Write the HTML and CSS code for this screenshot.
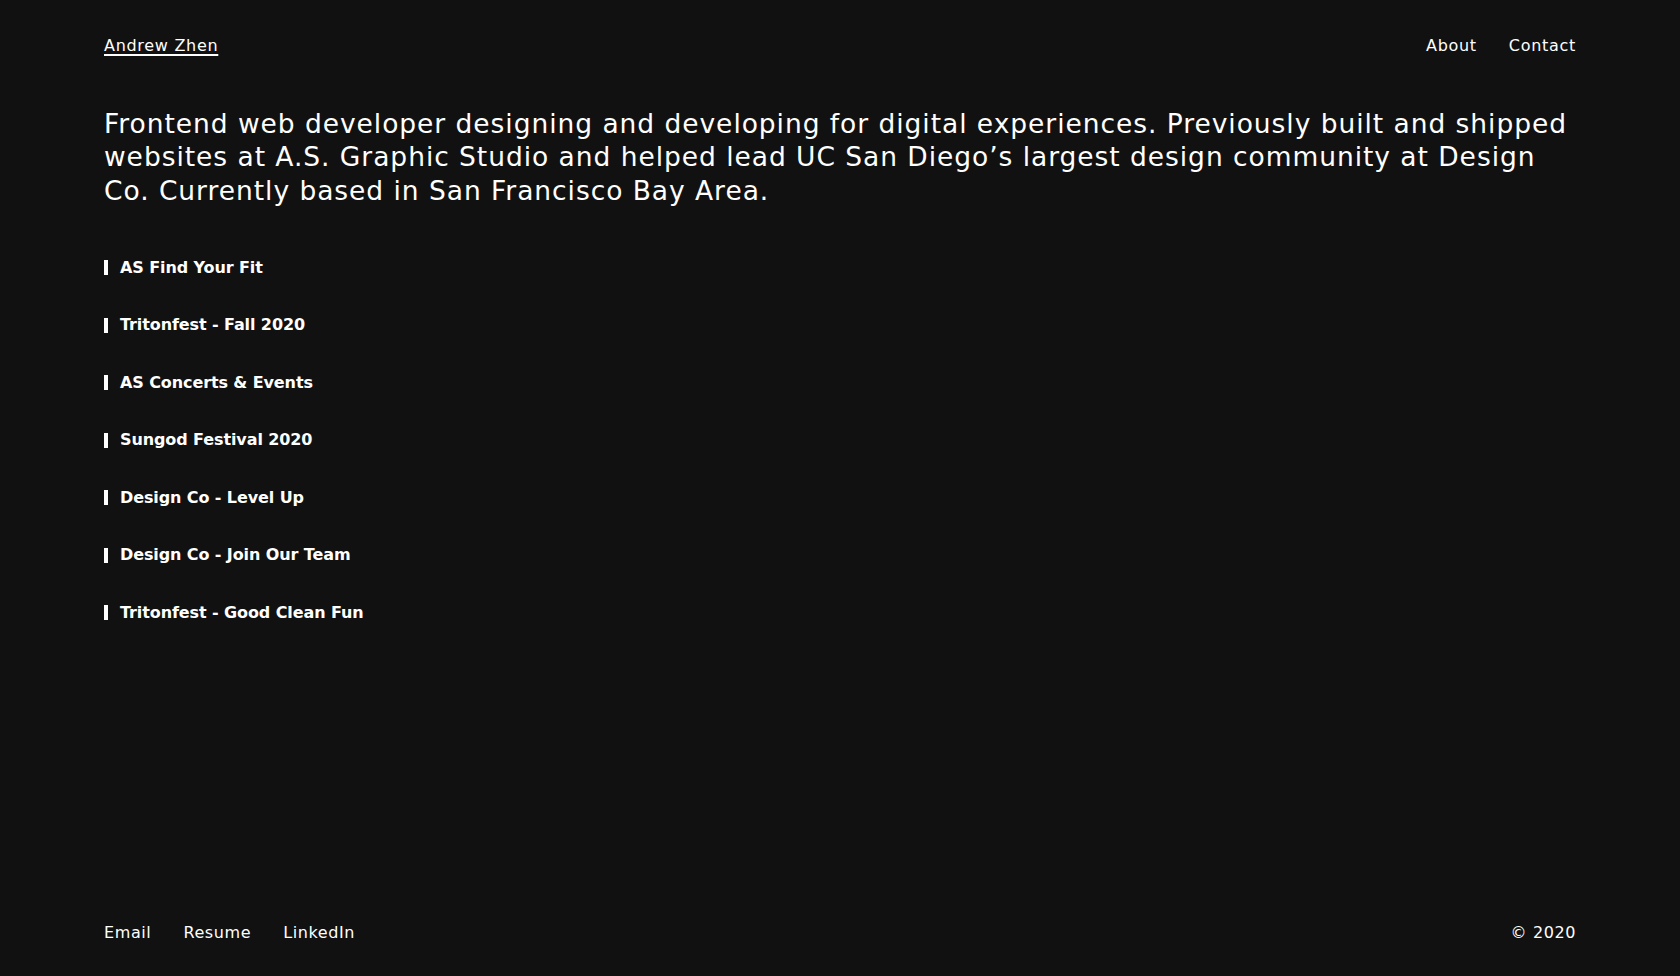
FILE: index.html
```html
<!DOCTYPE html>
<html lang="en">
<head>
<meta charset="utf-8">
<title>Andrew Zhen</title>
<link rel="stylesheet" href="styles.css">
</head>
<body>
<div class="page">
  <header class="header">
    <a class="logo" href="#">Andrew Zhen</a>
    <nav class="nav">
      <a href="#">About</a>
      <a href="#">Contact</a>
    </nav>
  </header>
  <main class="main">
    <p class="bio">Frontend web developer designing and developing for digital experiences. Previously built and shipped websites at A.S. Graphic Studio and helped lead UC San Diego’s largest design community at Design Co. Currently based in San Francisco Bay Area.</p>
    <ul class="projects">
      <li><a href="#">AS Find Your Fit</a></li>
      <li><a href="#">Tritonfest - Fall 2020</a></li>
      <li><a href="#">AS Concerts &amp; Events</a></li>
      <li><a href="#">Sungod Festival 2020</a></li>
      <li><a href="#">Design Co - Level Up</a></li>
      <li><a href="#">Design Co - Join Our Team</a></li>
      <li><a href="#">Tritonfest - Good Clean Fun</a></li>
    </ul>
  </main>
  <footer class="footer">
    <nav class="links">
      <a href="#">Email</a>
      <a href="#">Resume</a>
      <a href="#">LinkedIn</a>
    </nav>
    <span class="copy">© 2020</span>
  </footer>
</div>
</body>
</html>
```
FILE: styles.css
```css
html, body {
  margin: 0;
  padding: 0;
  background: #111111;
  color: #ffffff;
  font-family: "DejaVu Sans", sans-serif;
}
a { color: inherit; text-decoration: none; }
.page {
  min-height: 976px;
  box-sizing: border-box;
  padding: 0 104px;
  display: flex;
  flex-direction: column;
}
.header {
  display: flex;
  justify-content: space-between;
  align-items: center;
  padding-top: 35px;
  font-size: 16px;
  line-height: 22px;
  letter-spacing: 0.7px;
}
.logo {
  text-decoration: underline;
  text-decoration-thickness: 2px;
  text-underline-offset: 3px;
}
.nav { display: flex; gap: 32px; }
.main { flex: 1; }
.bio {
  margin: 49.5px 0 0;
  font-size: 26.5px;
  line-height: 33.75px;
  letter-spacing: 0.95px;
}
.projects {
  list-style: none;
  margin: 49px 0 0;
  padding: 0;
  display: flex;
  flex-direction: column;
  gap: 35.5px;
}
.projects li {
  display: flex;
  align-items: center;
  gap: 12px;
  font-size: 16px;
  font-weight: bold;
  line-height: 22px;
  letter-spacing: -0.1px;
}
.projects li::before {
  content: "";
  width: 4px;
  height: 15px;
  background: #fff;
}
.footer {
  display: flex;
  justify-content: space-between;
  align-items: center;
  padding-bottom: 32px;
  font-size: 16px;
  line-height: 22px;
  letter-spacing: 0.6px;
}
.links { display: flex; gap: 32px; }
```
